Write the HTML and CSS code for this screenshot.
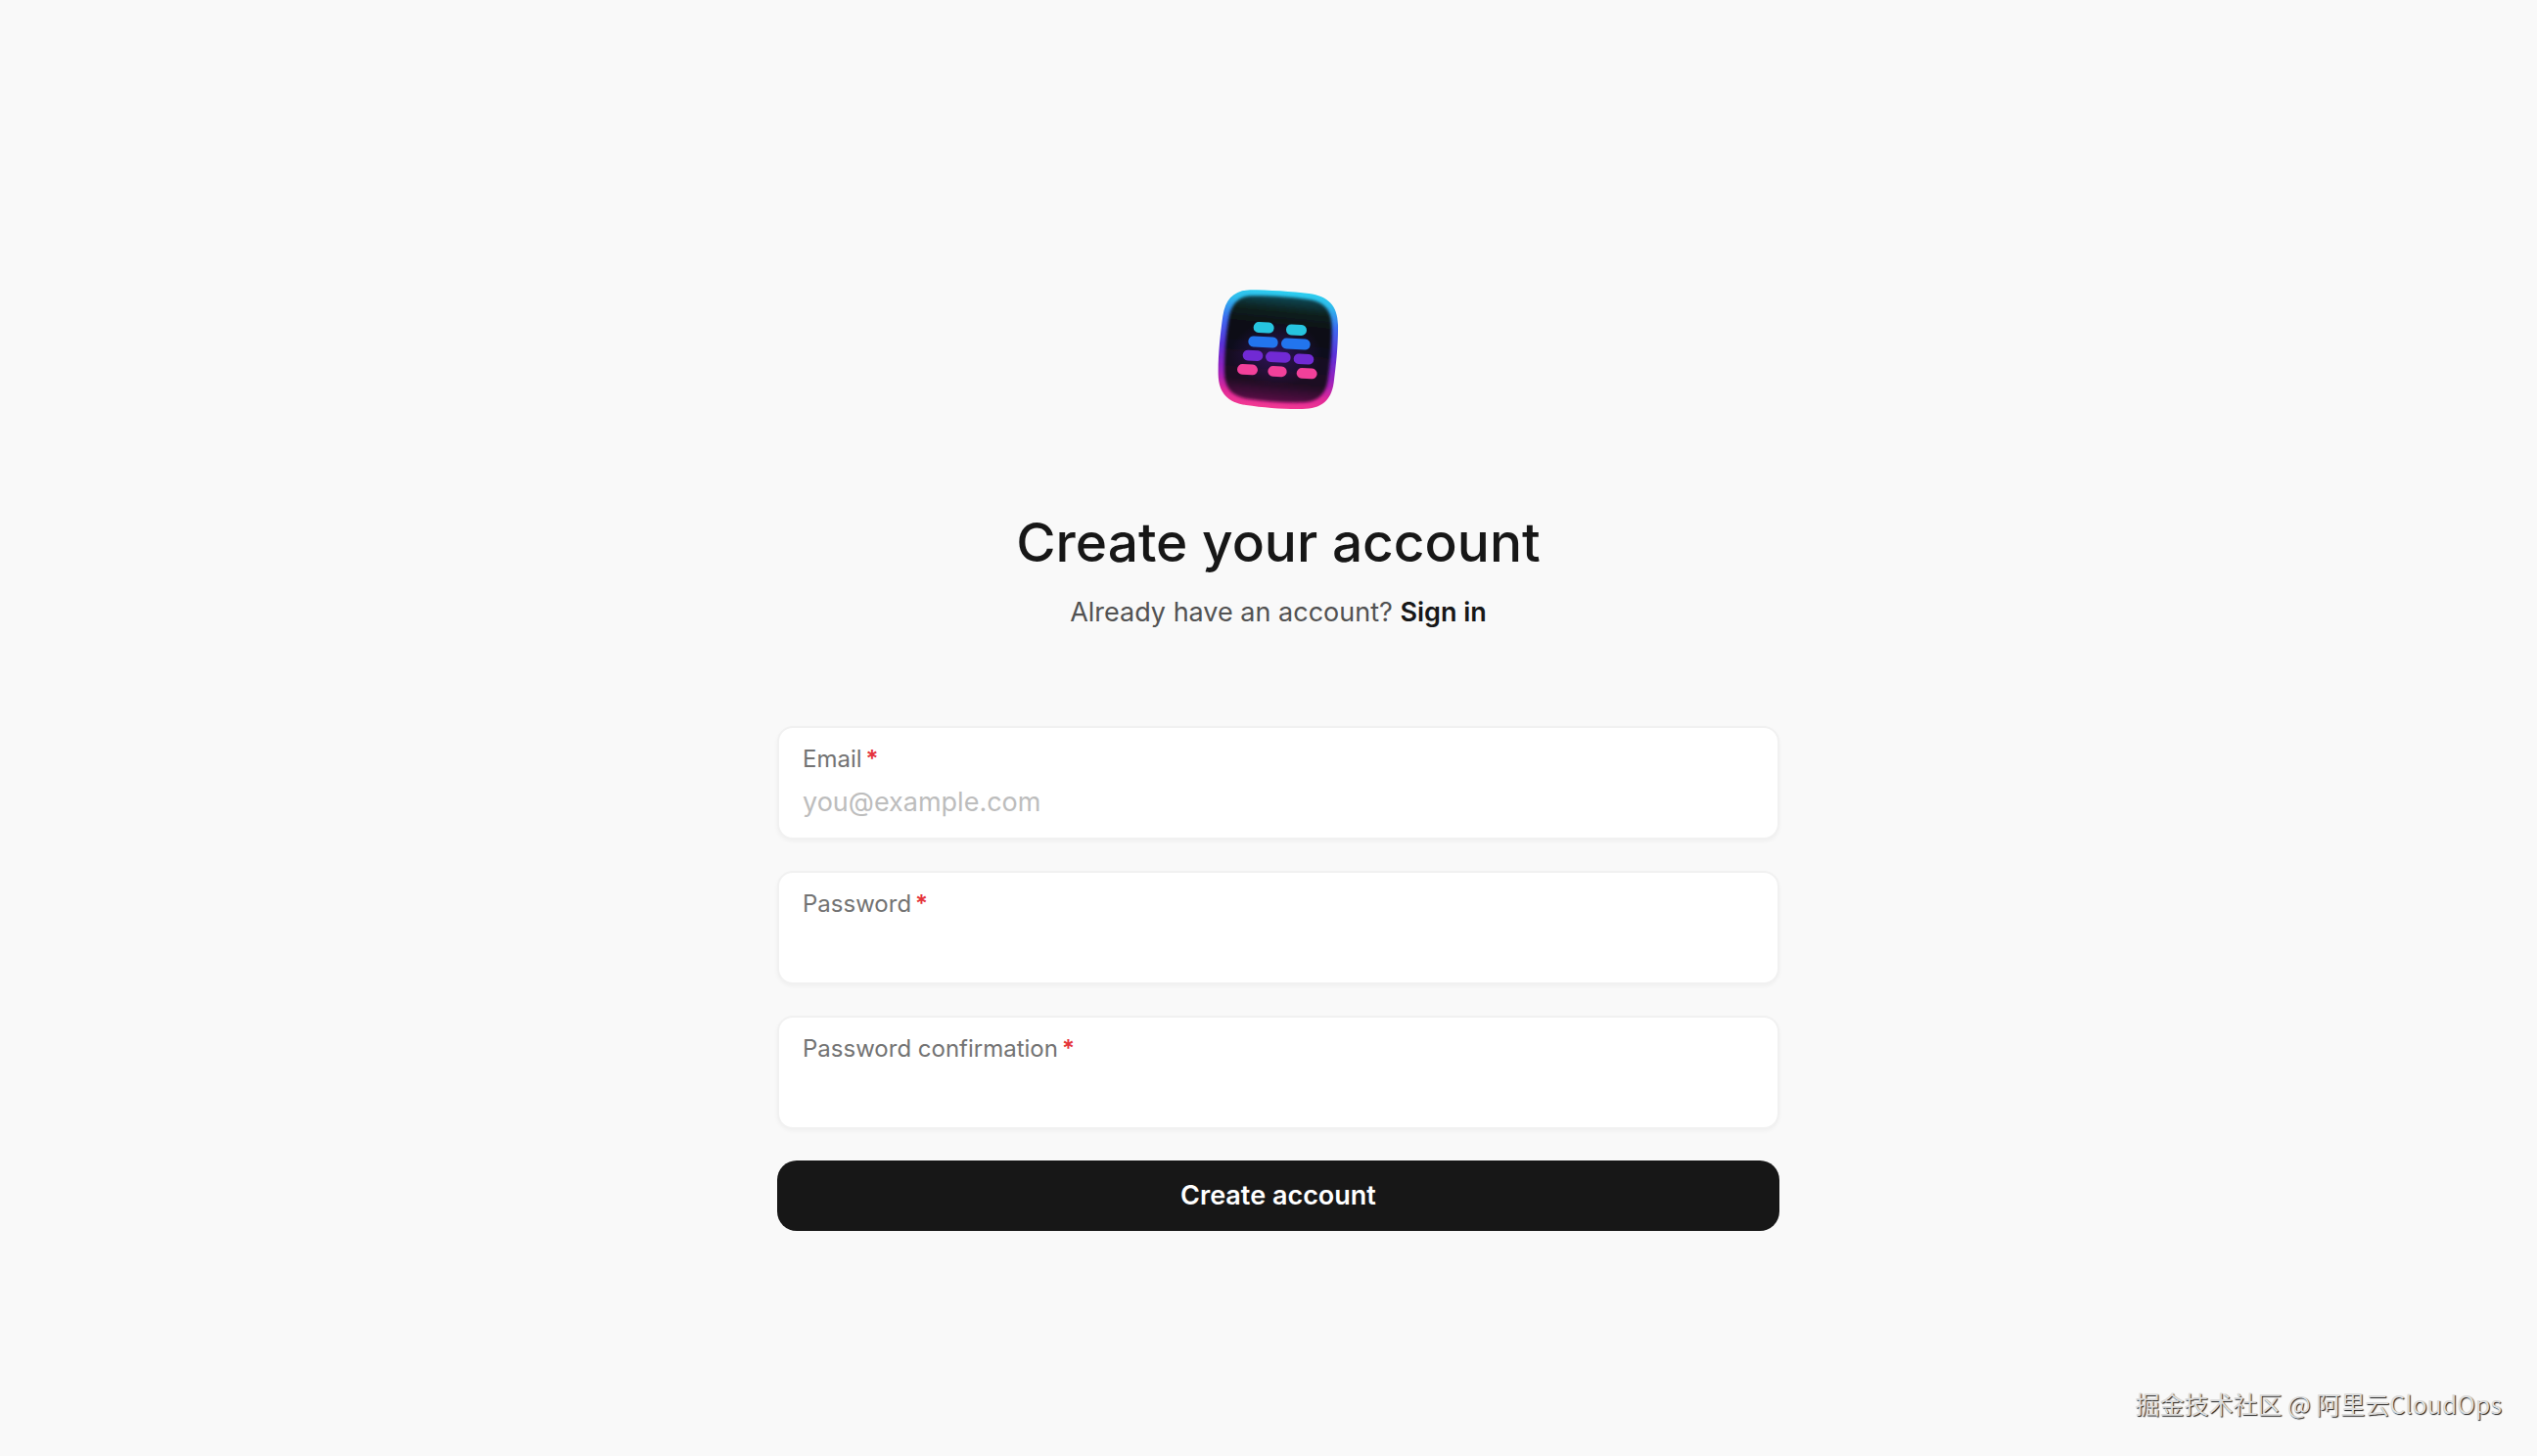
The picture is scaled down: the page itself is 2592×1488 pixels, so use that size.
FILE: index.html
```html
<!DOCTYPE html>
<html lang="en">
<head>
    <meta charset="UTF-8">
    <meta name="viewport" content="width=device-width, initial-scale=1.0">
    <title>Create your account</title>
    <link rel="stylesheet" href="styles.css">
</head>
<body>
    <main class="page">
        <div class="signup">
            <svg class="logo" viewBox="52 43 378 378" aria-hidden="true">
                <defs>
                    <linearGradient id="rim" x1="0.55" y1="0" x2="0.45" y2="1">
                        <stop offset="0" stop-color="#2cd0f0"/>
                        <stop offset="0.1" stop-color="#2ebcec"/>
                        <stop offset="0.28" stop-color="#3c6bf0"/>
                        <stop offset="0.5" stop-color="#5a30d8"/>
                        <stop offset="0.72" stop-color="#9a20bc"/>
                        <stop offset="0.88" stop-color="#e02a98"/>
                        <stop offset="1" stop-color="#f43a92"/>
                    </linearGradient>
                    <linearGradient id="face" x1="0.55" y1="0" x2="0.45" y2="1">
                        <stop offset="0" stop-color="#0c4a58"/>
                        <stop offset="0.14" stop-color="#07211f"/>
                        <stop offset="0.32" stop-color="#080a12"/>
                        <stop offset="0.6" stop-color="#140a22"/>
                        <stop offset="0.82" stop-color="#200a24"/>
                        <stop offset="1" stop-color="#5c1048"/>
                    </linearGradient>
                    <radialGradient id="glow">
                        <stop offset="0" stop-color="#4a1a90" stop-opacity="0.5"/>
                        <stop offset="1" stop-color="#4a1a90" stop-opacity="0"/>
                    </radialGradient>
                    <filter id="soft" x="-10%" y="-10%" width="120%" height="120%">
                        <feGaussianBlur stdDeviation="4"/>
                    </filter>
                    <filter id="edge" x="-10%" y="-10%" width="120%" height="120%">
                        <feGaussianBlur stdDeviation="2"/>
                    </filter>
                </defs>
                <path fill="url(#rim)" filter="url(#edge)" d="M155 50 C210 50 285 55 335 61 C393 68 423 98 424 157 C425 215 418 280 411 334 C403 391 372 414 315 415 C259 416 196 411 142 403 C87 395 58 366 57 309 C56 251 63 185 71 130 C79 77 106 51 155 50 Z"/>
                <path fill="url(#face)" filter="url(#soft)" d="M160 68 C211 67 279 72 327 78 C379 84 404 109 405 161 C406 213 400 275 393 324 C386 373 360 394 311 395 C258 396 200 391 149 384 C101 378 77 353 76 305 C75 253 81 191 89 140 C96 94 118 69 160 68 Z"/>
                <ellipse cx="235" cy="245" rx="140" ry="100" fill="url(#glow)"/>
                <g filter="url(#edge)">
                    <g fill="#27c5df">
                        <rect x="165" y="149" width="63" height="33" rx="16" transform="rotate(3 196 165)"/>
                        <rect x="265" y="156" width="63" height="33" rx="16" transform="rotate(3 296 172)"/>
                    </g>
                    <g fill="#2175ee">
                        <rect x="149" y="193" width="91" height="33" rx="16" transform="rotate(3 194 210)"/>
                        <rect x="250" y="199" width="89" height="33" rx="16" transform="rotate(3 294 216)"/>
                    </g>
                    <g fill="#712bd4">
                        <rect x="132" y="235" width="62" height="32" rx="16" transform="rotate(3 163 251)"/>
                        <rect x="202" y="240" width="77" height="32" rx="16" transform="rotate(3 240 256)"/>
                        <rect x="288" y="246" width="62" height="32" rx="16" transform="rotate(3 319 262)"/>
                    </g>
                    <g fill="#f23f9a">
                        <rect x="115" y="278" width="63" height="32" rx="16" transform="rotate(3 146 294)"/>
                        <rect x="209" y="284" width="58" height="32" rx="16" transform="rotate(3 238 300)"/>
                        <rect x="297" y="290" width="63" height="32" rx="16" transform="rotate(3 328 306)"/>
                    </g>
                </g>
            </svg>

            <h1 class="title">Create your account</h1>
            <p class="subtitle">Already have an account? <a href="#">Sign in</a></p>

            <form class="form">
                <div class="field">
                    <label for="email">Email<span class="required">*</span></label>
                    <input type="email" id="email" placeholder="you@example.com" required>
                </div>
                <div class="field">
                    <label for="password">Password<span class="required">*</span></label>
                    <input type="password" id="password" required>
                </div>
                <div class="field">
                    <label for="confirmation">Password confirmation<span class="required">*</span></label>
                    <input type="password" id="confirmation" required>
                </div>
                <button type="submit" class="submit-button">Create account</button>
            </form>
        </div>
    </main>
    <div class="watermark" lang="zh-CN">掘金技术社区 @ 阿里云CloudOps</div>
</body>
</html>
```

FILE: styles.css
```css
* {
    box-sizing: border-box;
}

body {
    margin: 0;
    background-color: #f9f9f9;
    color: #171717;
    font-family: Inter, "Liberation Sans", sans-serif;
    font-size: 27px;
    line-height: 40px;
}

.page {
    display: flex;
    justify-content: center;
    align-items: center;
    min-height: 100vh;
    padding: 64px 0 0 20px;
}

.signup {
    display: flex;
    flex-direction: column;
    align-items: center;
    width: 100%;
    max-width: 1024px;
}

.logo {
    width: 126px;
    height: 126px;
    margin-bottom: 98px;
}

.title {
    margin: 0 0 16px;
    font-size: 55px;
    font-weight: 500;
    line-height: 72px;
}

.subtitle {
    margin: 0 0 96px;
    color: #525252;
}

.subtitle a {
    color: #171717;
    font-weight: 600;
    text-decoration: none;
}

.form {
    display: flex;
    flex-direction: column;
    gap: 32px;
    width: 100%;
}

.field {
    display: flex;
    flex-direction: column;
    gap: 8px;
    padding: 16px 24px;
    background-color: #fff;
    border: 2px solid #f1f1f1;
    border-radius: 16px;
    box-shadow: 0 2px 4px rgba(0, 0, 0, 0.04);
}

.field label {
    color: #737373;
    font-size: 24px;
    line-height: 32px;
}

.required {
    margin-left: 4px;
    color: #e5343c;
    font-weight: 600;
}

.field input {
    width: 100%;
    height: 40px;
    padding: 0;
    border: none;
    outline: none;
    background: none;
    color: #171717;
    font: inherit;
}

.field input::placeholder {
    color: #bdbdbd;
    opacity: 1;
}

.submit-button {
    height: 72px;
    border: none;
    border-radius: 20px;
    background-color: #171717;
    color: #fff;
    font: inherit;
    font-weight: 600;
    cursor: pointer;
}

.submit-button:hover {
    background-color: #262626;
}

.watermark {
    position: absolute;
    right: 36px;
    bottom: 34px;
    color: #dcdcdc;
    font-family: "Noto Sans CJK SC", sans-serif;
    font-size: 25px;
    text-shadow: 1px 1px 1px #222;
}
```
